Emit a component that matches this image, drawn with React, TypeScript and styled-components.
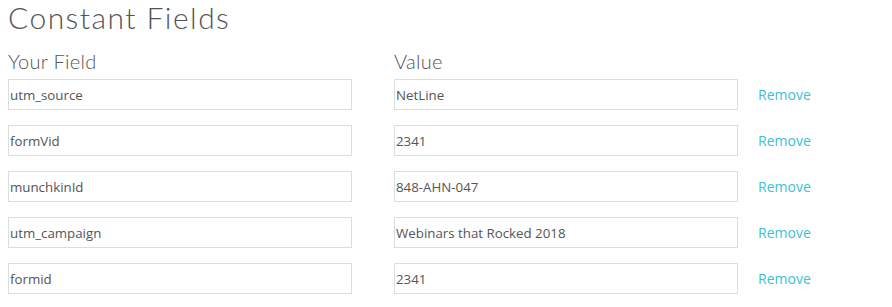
import React from "react";
import styled, { createGlobalStyle } from "styled-components";

const Global = createGlobalStyle`
  html, body { margin: 0; padding: 0; background: #fff; }
  body { font-family: "Open Sans", "Liberation Sans", sans-serif; }
`;

const Page = styled.div`
  padding: 2px 8px 0;
`;

const Title = styled.h1`
  margin: 0;
  font-family: "Lato", "Open Sans", sans-serif;
  font-weight: 300;
  font-size: 30px;
  line-height: 30px;
  color: #555;
  letter-spacing: 1.45px;
`;

const Grid = styled.div`
  display: grid;
  grid-template-columns: 344px 344px auto;
  column-gap: 42px;
  row-gap: 15px;
  align-items: center;
  margin-top: 17px;
`;

const Label = styled.div`
  font-family: "Lato", "Open Sans", sans-serif;
  font-weight: 300;
  font-size: 20px;
  line-height: 24px;
  color: #555;
  letter-spacing: 0.3px;
  margin-bottom: -9px;
`;

const Field = styled.input`
  box-sizing: border-box;
  height: 31px;
  width: 100%;
  margin: 0;
  padding: 0 1px;
  border: 1px solid #ddd;
  border-radius: 0;
  font-family: "Open Sans", sans-serif;
  font-size: 13.3px;
  color: #555;
  background: #fff;
  outline: none;
`;

const RemoveLink = styled.a`
  margin-left: -22px;
  font-family: "Open Sans", sans-serif;
  font-size: 14px;
  color: #3dbfd5;
  text-decoration: none;
  cursor: pointer;
`;

const rows: [string, string][] = [
  ["utm_source", "NetLine"],
  ["formVid", "2341"],
  ["munchkinId", "848-AHN-047"],
  ["utm_campaign", "Webinars that Rocked 2018"],
  ["formid", "2341"],
];

export default function App() {
  return (
    <>
      <Global />
      <Page>
        <Title>Constant Fields</Title>
        <Grid>
          <Label>Your Field</Label>
          <Label>Value</Label>
          <span />
          {rows.map(([k, v], i) => (
            <React.Fragment key={i}>
              <Field defaultValue={k} />
              <Field defaultValue={v} />
              <RemoveLink>Remove</RemoveLink>
            </React.Fragment>
          ))}
        </Grid>
      </Page>
    </>
  );
}
